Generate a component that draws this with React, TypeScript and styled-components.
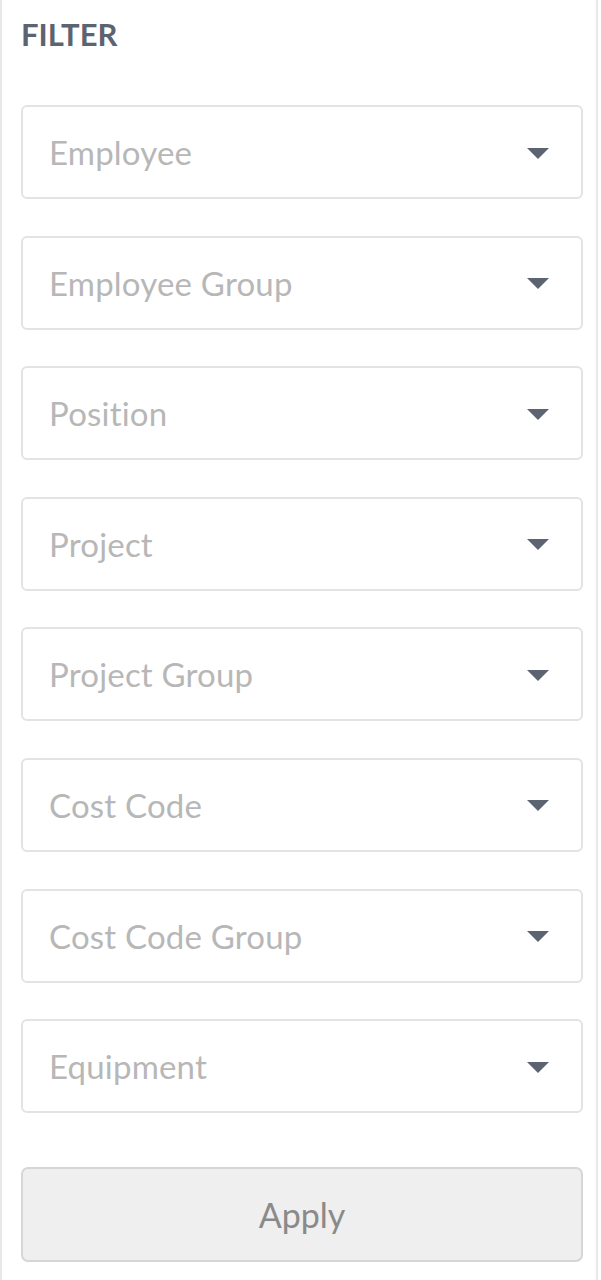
import styled, { createGlobalStyle } from 'styled-components';

const GlobalStyle = createGlobalStyle`
    html, body {
        margin: 0;
        padding: 0;
        background: #ffffff;
    }
    body {
        font-family: "Lato", "Open Sans", sans-serif;
    }
`

const Panel = styled.div`
    width: 598px;
    height: 1280px;
    box-sizing: border-box;
    border-left: 2px solid #e8e8e8;
    border-right: 2px solid #e8e8e8;
    padding: 14px 13px 0 19px;
    display: flex;
    flex-direction: column;
`

const Title = styled.h2`
    margin: 0;
    font-size: 31px;
    font-weight: 700;
    line-height: 40px;
    color: #5b6470;
`

const FilterList = styled.div`
    display: flex;
    flex-direction: column;
    gap: 36.6px;
    margin-top: 51px;
`

const Select = styled.div`
    height: 94px;
    box-sizing: border-box;
    border: 2px solid #e3e3e3;
    border-radius: 6px;
    display: flex;
    align-items: center;
    justify-content: space-between;
    padding: 0 32px 0 26px;
    background: #fff;
`

const Placeholder = styled.span`
    font-size: 33px;
    letter-spacing: 0.2px;
    color: #b7b7b7;
`

const Arrow = styled.svg`
    width: 22px;
    height: 11px;
    margin-top: 2px;
`

const ApplyButton = styled.button`
    margin-top: 54px;
    height: 95px;
    border: 2px solid #d6d6d6;
    border-radius: 7px;
    background: #efefef;
    color: #8a8a8a;
    font-family: inherit;
    font-size: 34px;
`

const filters = [
    'Employee',
    'Employee Group',
    'Position',
    'Project',
    'Project Group',
    'Cost Code',
    'Cost Code Group',
    'Equipment',
]

const App = () => {
    return (
        <>
            <GlobalStyle />
            <Panel>
                <Title>FILTER</Title>
                <FilterList>
                    {filters.map((f) => (
                        <Select key={f}>
                            <Placeholder>{f}</Placeholder>
                            <Arrow viewBox="0 0 22 11">
                                <path d="M0 0 H22 L11 11 Z" fill="#5b6470" />
                            </Arrow>
                        </Select>
                    ))}
                </FilterList>
                <ApplyButton>Apply</ApplyButton>
            </Panel>
        </>
    )
}

export default App
